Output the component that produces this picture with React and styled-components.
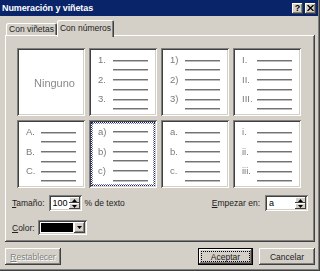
import React from "react";
import styled, { createGlobalStyle, css } from "styled-components";

const face = "#d4d0c8";

const GlobalStyle = createGlobalStyle`
  html, body { margin: 0; padding: 0; background: ${face}; }
  body { font-family: "Liberation Sans", Tahoma, Arial, sans-serif; }
  * { box-sizing: border-box; }
`;

const raised = css`
  box-shadow: inset -1px -1px #404040, inset 1px 1px #fff,
    inset -2px -2px #808080, inset 2px 2px ${face};
`;

const sunken = css`
  box-shadow: inset 1px 1px #808080, inset -1px -1px #fff,
    inset 2px 2px #404040, inset -2px -2px ${face};
`;

const Window = styled.div`
  width: 320px;
  height: 271px;
  background: ${face};
  border-right: 1px solid #404040;
  border-bottom: 1px solid #404040;
`;

const Frame = styled.div`
  height: 100%;
  border-right: 1px solid #808080;
  border-bottom: 1px solid #808080;
  display: flex;
  flex-direction: column;
`;

const TitleBar = styled.div`
  height: 16px;
  background: #0a246a;
  display: flex;
  align-items: center;
  padding: 0 2px 0 2px;
`;

const Title = styled.span`
  flex: 1;
  color: #fff;
  font-weight: bold;
  font-size: 9px;
  letter-spacing: -0.1px;
`;

const TitleButton = styled.div`
  width: 11px;
  height: 11px;
  margin-left: ${(p) => p.$gap || 0}px;
  background: ${face};
  ${raised};
  display: flex;
  align-items: center;
  justify-content: center;
  font-size: 9px;
  font-weight: bold;
  color: #000;
  line-height: 1;
`;

const TabRow = styled.div`
  display: flex;
  align-items: flex-end;
  height: 17px;
  margin-top: 4px;
  margin-bottom: -2px;
  padding-left: 6px;
  position: relative;
  z-index: 1;
`;

const Tab = styled.div`
  width: ${(p) => (p.$active ? 57 : 51)}px;
  height: ${(p) => (p.$active ? 17 : 12)}px;
  margin-bottom: ${(p) => (p.$active ? 0 : 2)}px;
  background: ${face};
  box-shadow: inset 1px 1px #fff, inset -1px 0 #404040, inset -2px 0 #808080;
  border-top-left-radius: 2px;
  border-top-right-radius: 2px;
  font-size: 8.5px;
  color: #222;
  padding-top: ${(p) => (p.$active ? 3 : 1)}px;
  text-align: center;
  white-space: nowrap;
`;

const Panel = styled.div`
  margin-left: 5px;
  width: 310px;
  height: 207px;
  ${raised};
  padding: 13px 7px 0 7px;
  display: flex;
  flex-direction: column;
`;

const Grid = styled.div`
  display: grid;
  grid-template-columns: repeat(4, 68px);
  grid-auto-rows: 68px;
  gap: 4px;
  margin-left: 5px;
`;

const Choice = styled.div`
  background: #fff;
  ${sunken};
  padding: 2px;
  display: flex;
`;

const ChoiceInner = styled.div`
  flex: 1;
  display: flex;
  flex-direction: column;
  justify-content: ${(p) => (p.$center ? "center" : "flex-start")};
  align-items: ${(p) => (p.$center ? "center" : "stretch")};
  padding: 5px 0 0 7px;
  ${(p) =>
    p.$selected &&
    css`
      border: 1px dotted #1c2470;
      outline: 1px dotted #7880b0;
      outline-offset: -2px;
      padding: 4px 0 0 6px;
    `}
`;

const NoneText = styled.span`
  font-size: 11px;
  color: #8a8a8a;
  margin-top: -4px;
  filter: grayscale(1);
`;

const PreviewRow = styled.div`
  display: flex;
  align-items: center;
  height: ${(p) => (p.$odd ? 10 : 9.6)}px;
`;

const Marker = styled.span`
  width: 15px;
  font-size: 9.5px;
  color: #7a7a7a;
  line-height: 1;
  filter: grayscale(1);
`;

const Line = styled.span`
  width: 35px;
  height: 1px;
  background: #737373;
  box-shadow: 0 1px 0 #bdbdbd;
`;

const ControlRow = styled.div`
  display: flex;
  align-items: center;
  height: ${(p) => p.$h}px;
  margin-top: ${(p) => p.$top}px;
`;

const Label = styled.span`
  font-size: 8.5px;
  color: #222;
  margin-right: ${(p) => p.$gap || 0}px;
  margin-left: ${(p) => p.$left || 0}px;
  white-space: nowrap;
  u {
    text-decoration: underline;
  }
`;

const Spacer = styled.div`
  flex: 1;
`;

const Field = styled.div`
  width: ${(p) => p.$w}px;
  height: 16px;
  background: #fff;
  ${sunken};
  padding: 2px;
  display: flex;
  align-items: stretch;
`;

const FieldText = styled.span`
  flex: 1;
  font-size: 9px;
  color: #000;
  padding-left: 2px;
  display: flex;
  align-items: center;
`;

const SpinBox = styled.div`
  width: 11px;
  display: flex;
  flex-direction: column;
`;

const SpinButton = styled.div`
  flex: 1;
  background: ${face};
  box-shadow: inset -1px -1px #404040, inset 1px 1px #fff;
  display: flex;
  align-items: center;
  justify-content: center;
`;

const ColorPicker = styled.div`
  width: 49px;
  height: 15px;
  background: #fff;
  ${sunken};
  padding: 2px;
  display: flex;
  margin-left: 3px;
`;

const Swatch = styled.div`
  flex: 1;
  background: #000;
  border: 1px solid #fff;
  outline: 1px solid #000;
  outline-offset: -3px;
`;

const DropButton = styled.div`
  width: 11px;
  background: ${face};
  ${raised};
  display: flex;
  align-items: center;
  justify-content: center;
`;

const ButtonRow = styled.div`
  display: flex;
  margin-top: 6px;
  padding: 0 3px 0 5px;
`;

const Button = styled.div`
  width: ${(p) => p.$w}px;
  height: 17px;
  margin-left: ${(p) => p.$gap || 0}px;
  background: ${face};
  font-size: 8.5px;
  display: flex;
  align-items: stretch;
  justify-content: center;
  padding: 3px;
  color: ${(p) => (p.$disabled ? "#808080" : "#222")};
  text-shadow: ${(p) => (p.$disabled ? "1px 1px 0 #fff" : "none")};
  ${(p) =>
    p.$default
      ? css`
          box-shadow: inset 0 0 0 1px #000, inset -2px -2px #404040,
            inset 2px 2px #fff, inset -3px -3px #808080;
        `
      : raised};
`;

const ButtonText = styled.span`
  flex: 1;
  display: flex;
  align-items: center;
  justify-content: center;
  border: 1px solid transparent;
  ${(p) =>
    p.$focus &&
    css`
      border: 1px dotted #000;
    `}
`;

const Arrow = ({ up, size = 5 }) => (
  <svg width={size} height={3} viewBox="0 0 5 3">
    {up ? (
      <polygon points="2.5,0 5,3 0,3" fill="#000" />
    ) : (
      <polygon points="0,0 5,0 2.5,3" fill="#000" />
    )}
  </svg>
);

const Spinner = () => (
  <SpinBox>
    <SpinButton>
      <Arrow up />
    </SpinButton>
    <SpinButton>
      <Arrow />
    </SpinButton>
  </SpinBox>
);

const lists = [
  ["1.", "2.", "3."],
  ["1)", "2)", "3)"],
  ["I.", "II.", "III."],
  ["A.", "B.", "C."],
  ["a)", "b)", "c)"],
  ["a.", "b.", "c."],
  ["i.", "ii.", "iii."],
];

function Preview({ markers }) {
  const rows = [];
  markers.forEach((m, i) => {
    rows.push(
      <PreviewRow key={"m" + i} $odd>
        <Marker>{m}</Marker>
        <Line />
      </PreviewRow>
    );
    rows.push(
      <PreviewRow key={"l" + i}>
        <Marker />
        <Line />
      </PreviewRow>
    );
  });
  return rows;
}

export default function App() {
  return (
    <>
      <GlobalStyle />
      <Window>
        <Frame>
          <TitleBar>
            <Title>Numeración y viñetas</Title>
            <TitleButton>?</TitleButton>
            <TitleButton $gap={2}>
              <svg width="7" height="6" viewBox="0 0 7 6">
                <path d="M0.5 0 L6.5 6 M6.5 0 L0.5 6" stroke="#000" strokeWidth="1.3" />
              </svg>
            </TitleButton>
          </TitleBar>

          <TabRow>
            <Tab>Con viñetas</Tab>
            <Tab $active>Con números</Tab>
          </TabRow>

          <Panel>
            <Grid>
              <Choice>
                <ChoiceInner $center>
                  <NoneText>Ninguno</NoneText>
                </ChoiceInner>
              </Choice>
              {lists.map((markers, i) => (
                <Choice key={i}>
                  <ChoiceInner $selected={i === 4}>
                    <Preview markers={markers} />
                  </ChoiceInner>
                </Choice>
              ))}
            </Grid>

            <ControlRow $h={16} $top={7}>
              <Label $gap={4}>
                <u>T</u>amaño:
              </Label>
              <Field $w={33}>
                <FieldText>100</FieldText>
                <Spinner />
              </Field>
              <Label $left={3}>% de texto</Label>
              <Spacer />
              <Label $gap={5}>
                <u>E</u>mpezar en:
              </Label>
              <Field $w={43}>
                <FieldText>a</FieldText>
                <Spinner />
              </Field>
            </ControlRow>

            <ControlRow $h={15} $top={9}>
              <Label>
                <u>C</u>olor:
              </Label>
              <ColorPicker>
                <Swatch />
                <DropButton>
                  <Arrow size={5} />
                </DropButton>
              </ColorPicker>
            </ControlRow>
          </Panel>

          <ButtonRow>
            <Button $w={56} $disabled>
              <ButtonText>
                <span>
                  <u>R</u>establecer
                </span>
              </ButtonText>
            </Button>
            <Spacer />
            <Button $w={55} $default>
              <ButtonText $focus>Aceptar</ButtonText>
            </Button>
            <Button $w={56} $gap={6}>
              <ButtonText>Cancelar</ButtonText>
            </Button>
          </ButtonRow>
        </Frame>
      </Window>
    </>
  );
}
